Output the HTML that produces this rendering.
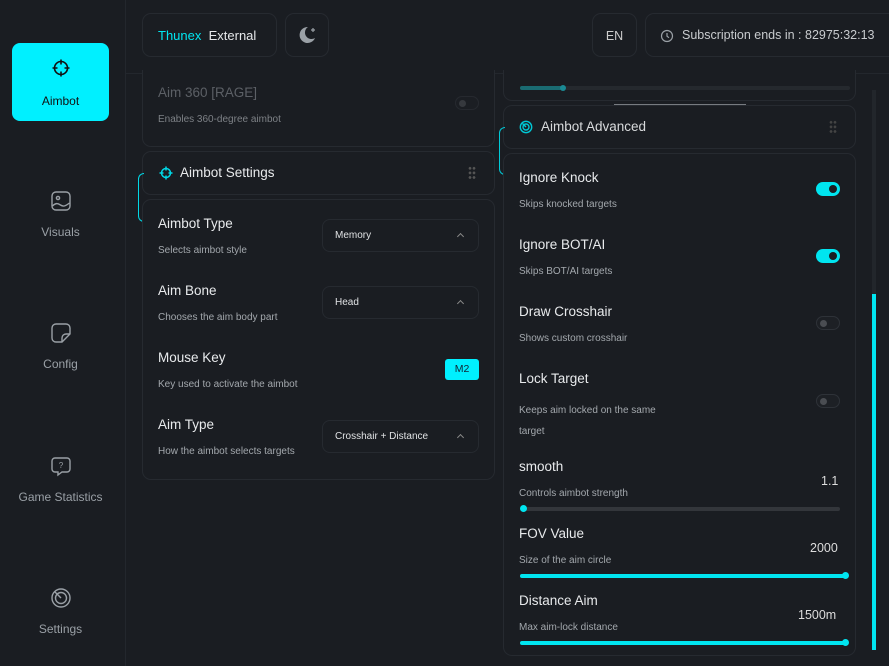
<!DOCTYPE html>
<html><head><meta charset="utf-8"><style>
*{margin:0;padding:0;box-sizing:border-box}
body{width:889px;height:666px;background:#1a1d22;font-family:"Liberation Sans","DejaVu Sans",sans-serif;color:#e6e8ea;position:relative;overflow:hidden}
.a{position:absolute}
.side{left:0;top:0;width:126px;height:666px;border-right:1px solid #23272d;background:#1a1d22}
.nav{left:12px;width:97px;height:78px;border-radius:8px;text-align:center;font-size:12px;color:#9aa0a6}
.nav svg{display:block;margin:0 auto}
.box{border:1px solid #262a30;border-radius:9px;background:#1a1d22}
.t{font-size:13.5px;color:#e8eaec}
.s{font-size:10px;color:#a3a8ad}
.sel{border:1px solid #262a30;border-radius:8px;width:157px;height:33px;font-size:10px;color:#e0e2e4;padding:10px 12px}
.sel:after{content:"";position:absolute;right:15px;top:14px;width:4px;height:4px;border-left:1.3px solid #888;border-top:1.3px solid #888;transform:rotate(45deg)}
.tg{width:24px;height:14px;border-radius:7px}
.on{background:#00e5f0}
.on:after{content:"";position:absolute;right:3px;top:3px;width:8px;height:8px;border-radius:50%;background:#1a1d22}
.off{border:1px solid #2e3238;background:#1d2025}
.off:after{content:"";position:absolute;left:3px;top:3px;width:7px;height:7px;border-radius:50%;background:#4a4d52}
.tr{height:4px;border-radius:2px}
.dot{width:7px;height:7px;border-radius:50%;background:#00e5f0}
</style></head><body>
<div class="a side"></div>
<div class="a nav" style="top:43px;background:#00f0ff;color:#111">
<svg style="margin-top:15px" width="20" height="20" viewBox="0 0 20 20" fill="none" stroke="#111" stroke-width="1.6"><circle cx="10" cy="10" r="6.5"/><path d="M10 1.5v5M10 13.5v5M1.5 10h5M13.5 10h5"/></svg>
<div style="margin-top:16px">Aimbot</div></div>
<div class="a nav" style="top:190px"><svg width="22" height="22" viewBox="0 0 22 22" fill="none" stroke="#9aa0a6" stroke-width="1.4"><rect x="2" y="2" width="18" height="18" rx="4"/><circle cx="8" cy="8" r="1.6"/><path d="M2.5 16c3-3 5-3 8-1s5 1 9-2"/></svg><div style="margin-top:13px">Visuals</div></div>
<div class="a nav" style="top:322px"><svg width="22" height="22" viewBox="0 0 22 22" fill="none" stroke="#9aa0a6" stroke-width="1.4"><path d="M6 2h10a4 4 0 0 1 4 4v6l-8 8H6a4 4 0 0 1-4-4V6a4 4 0 0 1 4-4z"/><path d="M12 20v-4a4 4 0 0 1 4-4h4"/></svg><div style="margin-top:13px">Config</div></div>
<div class="a nav" style="top:455px"><svg width="22" height="22" viewBox="0 0 22 22" fill="none" stroke="#9aa0a6" stroke-width="1.4"><path d="M5 3h12a3 3 0 0 1 3 3v8a3 3 0 0 1-3 3h-5l-4 3v-3H5a3 3 0 0 1-3-3V6a3 3 0 0 1 3-3z"/><text x="11" y="13" font-size="8" fill="#9aa0a6" stroke="none" text-anchor="middle" font-family="Liberation Sans">?</text></svg><div style="margin-top:13px">Game Statistics</div></div>
<div class="a nav" style="top:587px"><svg width="22" height="22" viewBox="0 0 22 22" fill="none" stroke="#9aa0a6" stroke-width="1.4"><circle cx="11" cy="11" r="9"/><circle cx="11" cy="11" r="5.5"/><path d="M11 11L5 5"/></svg><div style="margin-top:13px">Settings</div></div>

<div class="a" style="left:126px;top:73px;width:763px;height:1px;background:#23272d"></div>
<div class="a box" style="left:142px;top:13px;width:135px;height:44px;font-size:13px;padding:14px 15px"><span style="color:#00e5f0">Thunex</span>&nbsp; External</div>
<div class="a box" style="left:285px;top:13px;width:44px;height:44px"><svg class="a" style="left:12px;top:11px" width="20" height="20" viewBox="0 0 20 20"><path d="M10 2a8 8 0 1 0 7 11A6.5 6.5 0 0 1 10 2z" fill="#9aa0a6"/><path d="M15 3v4M13 5h4" stroke="#9aa0a6" stroke-width="1.2"/></svg></div>
<div class="a box" style="left:592px;top:13px;width:45px;height:44px;font-size:12.5px;color:#ccc;padding:15px 0;text-align:center">EN</div>
<div class="a box" style="left:645px;top:13px;width:260px;height:44px;font-size:12.5px;color:#c8cbce;padding:14px 16px 0 36px">Subscription ends in : 82975:32:13
<svg class="a" style="left:14px;top:15px" width="14" height="14" viewBox="0 0 14 14" fill="none" stroke="#9aa0a6" stroke-width="1.2"><circle cx="7" cy="7" r="5.5"/><path d="M7 4v3.2l2 1.5"/></svg></div>

<!-- left column -->
<div class="a box" style="left:142px;top:70px;width:353px;height:77px;border-top:none;border-radius:0 0 9px 9px"></div>
<div class="a t" style="left:158px;top:85px;color:#5c6066">Aim 360 [RAGE]</div>
<div class="a s" style="left:158px;top:114px;color:#7d8186">Enables 360-degree aimbot</div>
<div class="a tg off" style="left:455px;top:96px;opacity:.6"></div>
<div class="a" style="left:253px;top:151px;width:132px;height:1px;background:#00d8e6"></div>
<div class="a box" style="left:142px;top:151px;width:353px;height:44px"></div>
<div class="a" style="left:138px;top:173px;width:6px;height:49px;border:1px solid #00d8e6;border-right:none;border-radius:6px 0 0 6px"></div>
<svg class="a" style="left:159px;top:166px" width="14" height="14" viewBox="0 0 14 14" fill="none" stroke="#00d8e6" stroke-width="1.5"><circle cx="7" cy="7" r="4.5"/><path d="M7 0.5v4M7 9.5v4M0.5 7h4M9.5 7h4"/></svg>
<div class="a t" style="left:180px;top:165px">Aimbot Settings</div>
<div class="a" style="left:468px;top:166px;width:8px;height:14px;background:radial-gradient(circle,#555 1.2px,transparent 1.5px) 0 0/4px 4.6px"></div>
<div class="a box" style="left:142px;top:199px;width:353px;height:281px"></div>
<div class="a t" style="left:158px;top:216px">Aimbot Type</div><div class="a s" style="left:158px;top:245px">Selects aimbot style</div>
<div class="a sel" style="left:322px;top:219px">Memory</div>
<div class="a t" style="left:158px;top:283px">Aim Bone</div><div class="a s" style="left:158px;top:312px">Chooses the aim body part</div>
<div class="a sel" style="left:322px;top:286px">Head</div>
<div class="a t" style="left:158px;top:350px">Mouse Key</div><div class="a s" style="left:158px;top:379px">Key used to activate the aimbot</div>
<div class="a" style="left:445px;top:359px;width:34px;height:21px;background:#00f0ff;border-radius:3px;color:#123;font-size:10.5px;text-align:center;line-height:21px">M2</div>
<div class="a t" style="left:158px;top:417px">Aim Type</div><div class="a s" style="left:158px;top:446px">How the aimbot selects targets</div>
<div class="a sel" style="left:322px;top:420px">Crosshair + Distance</div>

<!-- right column -->
<div class="a box" style="left:503px;top:70px;width:353px;height:31px;border-top:none;border-radius:0 0 9px 9px"></div>
<div class="a tr" style="left:520px;top:86px;width:330px;background:#25292e"></div>
<div class="a tr" style="left:520px;top:86px;width:42px;background:#1a6b72"></div>
<div class="a" style="left:560px;top:85px;width:6px;height:6px;border-radius:50%;background:#1a8a94"></div>
<div class="a" style="left:614px;top:104px;width:132px;height:1px;background:#777b80"></div>
<div class="a box" style="left:503px;top:105px;width:353px;height:44px"></div>
<div class="a" style="left:499px;top:127px;width:6px;height:48px;border:1px solid #00c8d6;border-right:none;border-radius:6px 0 0 6px"></div>
<svg class="a" style="left:519px;top:120px" width="14" height="14" viewBox="0 0 14 14" fill="none" stroke="#00c8d6" stroke-width="1.4"><circle cx="7" cy="7" r="5.7"/><circle cx="7" cy="7" r="3"/><path d="M7 7L3.5 3.5"/></svg>
<div class="a t" style="left:541px;top:119px;color:#d8dadc">Aimbot Advanced</div>
<div class="a" style="left:829px;top:120px;width:8px;height:14px;background:radial-gradient(circle,#444 1.2px,transparent 1.5px) 0 0/4px 4.6px"></div>
<div class="a box" style="left:503px;top:153px;width:353px;height:503px"></div>
<div class="a t" style="left:519px;top:170px">Ignore Knock</div><div class="a s" style="left:519px;top:199px">Skips knocked targets</div><div class="a tg on" style="left:816px;top:182px"></div>
<div class="a t" style="left:519px;top:237px">Ignore BOT/AI</div><div class="a s" style="left:519px;top:266px">Skips BOT/AI targets</div><div class="a tg on" style="left:816px;top:249px"></div>
<div class="a t" style="left:519px;top:304px">Draw Crosshair</div><div class="a s" style="left:519px;top:333px">Shows custom crosshair</div><div class="a tg off" style="left:816px;top:316px"></div>
<div class="a t" style="left:519px;top:371px">Lock Target</div><div class="a s" style="left:519px;top:400px;line-height:21px">Keeps aim locked on the same<br>target</div><div class="a tg off" style="left:816px;top:394px"></div>
<div class="a t" style="left:519px;top:459px">smooth</div><div class="a s" style="left:519px;top:488px">Controls aimbot strength</div><div class="a" style="left:821px;top:474px;font-size:12.5px;color:#ddd">1.1</div>
<div class="a tr" style="left:522px;top:507px;width:318px;background:#33363b"></div><div class="a dot" style="left:520px;top:505px"></div>
<div class="a t" style="left:519px;top:526px">FOV Value</div><div class="a s" style="left:519px;top:555px">Size of the aim circle</div><div class="a" style="left:810px;top:541px;font-size:12.5px;color:#ddd">2000</div>
<div class="a tr" style="left:520px;top:574px;width:325px;background:#00e5f0"></div><div class="a dot" style="left:842px;top:572px"></div>
<div class="a t" style="left:519px;top:593px">Distance Aim</div><div class="a s" style="left:519px;top:622px">Max aim-lock distance</div><div class="a" style="left:798px;top:608px;font-size:12.5px;color:#ddd">1500m</div>
<div class="a tr" style="left:520px;top:641px;width:325px;background:#00e5f0"></div><div class="a dot" style="left:842px;top:639px"></div>

<div class="a" style="left:872px;top:90px;width:4px;height:560px;background:#22262b"></div>
<div class="a" style="left:872px;top:294px;width:4px;height:356px;background:#00e5f0"></div>
</body></html>
